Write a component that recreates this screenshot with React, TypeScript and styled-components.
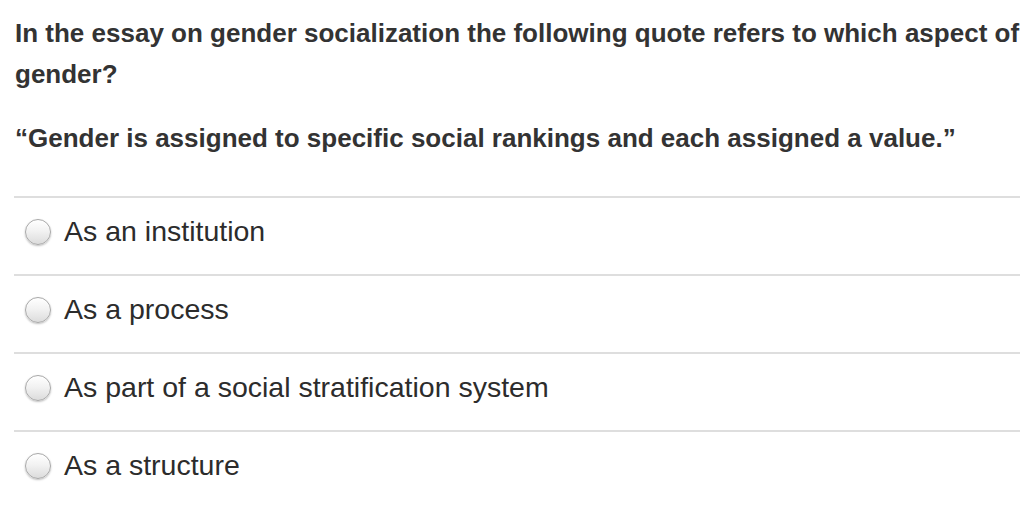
import React from "react";
import styled, { createGlobalStyle } from "styled-components";

const GlobalStyle = createGlobalStyle`
  body {
    margin: 0;
    background: #ffffff;
    font-family: "Liberation Sans", Arial, Helvetica, sans-serif;
    color: #333333;
  }
`;

const Page = styled.div`
  width: 1006px;
  padding: 0 0 0 14px;
`;

const Question = styled.div`
  padding: 0 0 0 1px;
  margin-top: 13px;
  font-weight: 700;
  font-size: 26px;
  line-height: 41px;
`;

const Quote = styled.p`
  margin: 23px 0 0 0;
`;

const Choices = styled.ul`
  list-style: none;
  margin: 37px 0 0 0;
  padding: 0;
`;

const Choice = styled.li`
  display: flex;
  align-items: center;
  box-sizing: border-box;
  height: 78px;
  border-top: 2px solid #dedede;
  padding: 0 0 9px 11px;
  font-size: 28.5px;
  color: #2c2c2c;
`;

const Radio = styled.span`
  width: 24px;
  height: 24px;
  border-radius: 50%;
  border: 1px solid #a8a8a8;
  background: linear-gradient(#ffffff 0%, #f2f2f2 45%, #dcdcdc 100%);
  box-shadow: 0 1px 2px rgba(0, 0, 0, 0.25), inset 0 1px 1px #ffffff;
  margin-right: 13px;
  flex-shrink: 0;
`;

const choices = [
  "As an institution",
  "As a process",
  "As part of a social stratification system",
  "As a structure",
];

export default function App() {
  return (
    <Page>
      <GlobalStyle />
      <Question>
        In the essay on gender socialization the following quote refers to which aspect of
        gender?
        <Quote>“Gender is assigned to specific social rankings and each assigned a value.”</Quote>
      </Question>
      <Choices>
        {choices.map((c) => (
          <Choice key={c}>
            <Radio />
            {c}
          </Choice>
        ))}
      </Choices>
    </Page>
  );
}
